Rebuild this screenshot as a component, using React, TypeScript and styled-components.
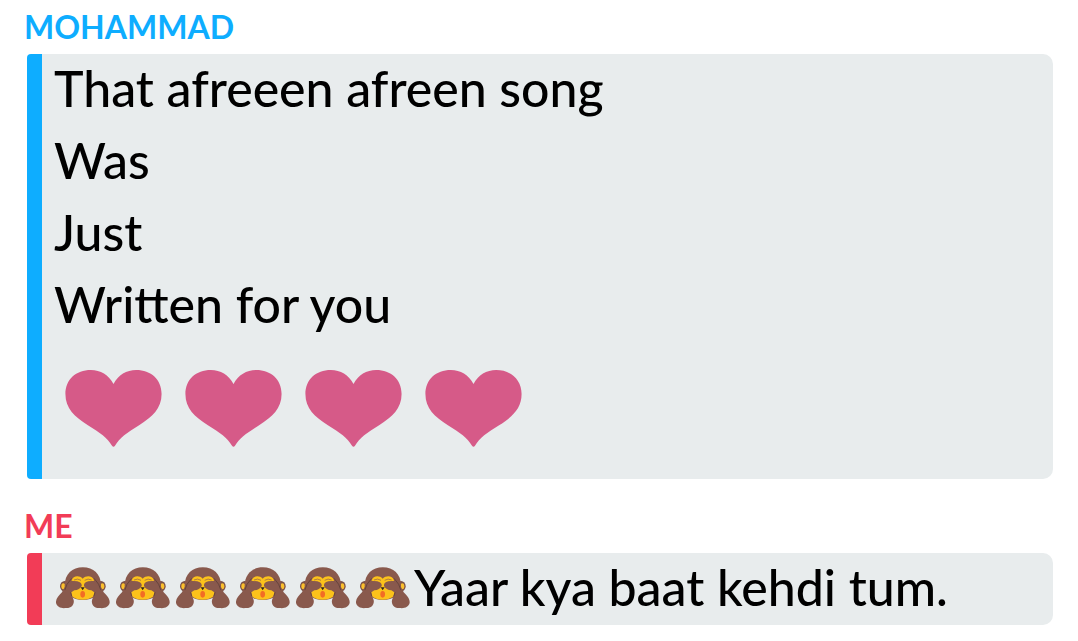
import React from 'react';
import styled, { createGlobalStyle } from 'styled-components';

const GlobalStyle = createGlobalStyle`
  * { box-sizing: border-box; }
  body {
    margin: 0;
    background: #fff;
    color: #000;
    font-family: Lato, 'Open Sans', sans-serif;
  }
`;

const Conversation = styled.main`
  display: flex;
  flex-direction: column;
  gap: 20px;
  padding: 0 25px;
`;

const Group = styled.section`
  display: flex;
  flex-direction: column;
`;

const Sender = styled.h2<{ $color: string }>`
  margin: 0 0 0 -1px;
  padding-top: 7px;
  height: 54px;
  font-size: 32px;
  line-height: 40px;
  font-weight: 700;
  color: ${(p) => p.$color};
`;

const Bubble = styled.div<{ $color: string }>`
  margin-left: 2px;
  padding-left: 12px;
  border-left: 15px solid ${(p) => p.$color};
  border-radius: 4px 10px 10px 4px;
  background: #e8eced;
`;

const Message = styled.p`
  display: flex;
  align-items: center;
  margin: 0;
  padding-bottom: 4px;
  font-size: 50px;
  line-height: 68px;
  font-weight: 500;
`;

const Hearts = styled.div`
  display: flex;
  gap: 23px;
  padding: 28px 11px 32px;
`;

const Monkeys = styled.span`
  display: flex;
  gap: 6px;
  padding: 2px 0 0 2px;
  margin-right: 4px;
`;

const Heart = () => (
  <svg width="97" height="77" viewBox="0 0 291 233" role="img" aria-label="Heart">
    <path
      fill="#d65a88"
      d="M145.500 42C131 15 106 0 77 0C32 0 0 29 0 73C0 117 28 142 68 167C105 190 127 205 141 229Q145.500 236 150 229C164 205 186 190 223 167C263 142 291 117 291 73C291 29 259 0 214 0C185 0 160 15 145.500 42Z"
    />
  </svg>
);

const Monkey = () => (
  <svg width="54" height="42" viewBox="20 36 162 126" role="img" aria-label="Monkey covering its eyes">
    <ellipse cx="46" cy="94" rx="14" ry="16" fill="#795046" />
    <ellipse cx="155" cy="94" rx="14" ry="16" fill="#795046" />
    <ellipse cx="42" cy="94" rx="6" ry="9" fill="#fbc02d" />
    <ellipse cx="159" cy="94" rx="6" ry="9" fill="#fbc02d" />
    <path fill="#89594d" d="M46 92C46 57 69 37 100.500 37S155 57 155 92C155 117 131 135 100.500 135S46 117 46 92Z" />
    <path
      fill="#fcc21b"
      d="M100 71C90 60 71 62 67 76L63 100C58 124 76 134 100 134S143 124 138 100L134 76C130 62 111 60 100 71Z"
    />
    <path d="M74 75Q85 69 95 76M106 76Q116 69 127 75" fill="none" stroke="#89594d" strokeWidth="2" />
    <path
      fill="#89594d"
      d="M62 77L84 79Q99 83 97 93Q91 105 75 106L66 112Q67 122 73 135C76 149 65 161 49 159C36 161 22 155 20 143C19 132 28 122 38 112L51 86Z"
    />
    <path
      fill="#89594d"
      d="M139 77L117 79Q102 83 104 93Q110 105 126 106L135 112Q134 122 128 135C125 149 136 161 152 159C165 161 179 155 181 143C182 132 173 122 163 112L150 86Z"
    />
    <path
      d="M66 71L53 88L47 104M135 71L148 88L154 104M64 113L67 122M137 113L134 122"
      fill="none"
      stroke="#553a34"
      strokeWidth="2"
      strokeLinecap="round"
    />
    <path d="M94 97H106L100 106Z" fill="#30251f" />
    <ellipse cx="100" cy="118" rx="7" ry="10" fill="#f26c25" />
  </svg>
);

const repeat = (count: number, Icon: React.FC) => Array.from({ length: count }, (_, i) => <Icon key={i} />);

const BLUE = '#0eadff';
const RED = '#f23c57';

export default function App() {
  return (
    <>
      <GlobalStyle />
      <Conversation>
        <Group>
          <Sender $color={BLUE}>MOHAMMAD</Sender>
          <Bubble $color={BLUE}>
            <Message>That afreeen afreen song</Message>
            <Message>Was</Message>
            <Message>Just</Message>
            <Message>Written for you</Message>
            <Hearts>{repeat(4, Heart)}</Hearts>
          </Bubble>
        </Group>
        <Group>
          <Sender $color={RED}>ME</Sender>
          <Bubble $color={RED}>
            <Message>
              <Monkeys>{repeat(6, Monkey)}</Monkeys>
              Yaar kya baat kehdi tum.
            </Message>
          </Bubble>
        </Group>
      </Conversation>
    </>
  );
}
